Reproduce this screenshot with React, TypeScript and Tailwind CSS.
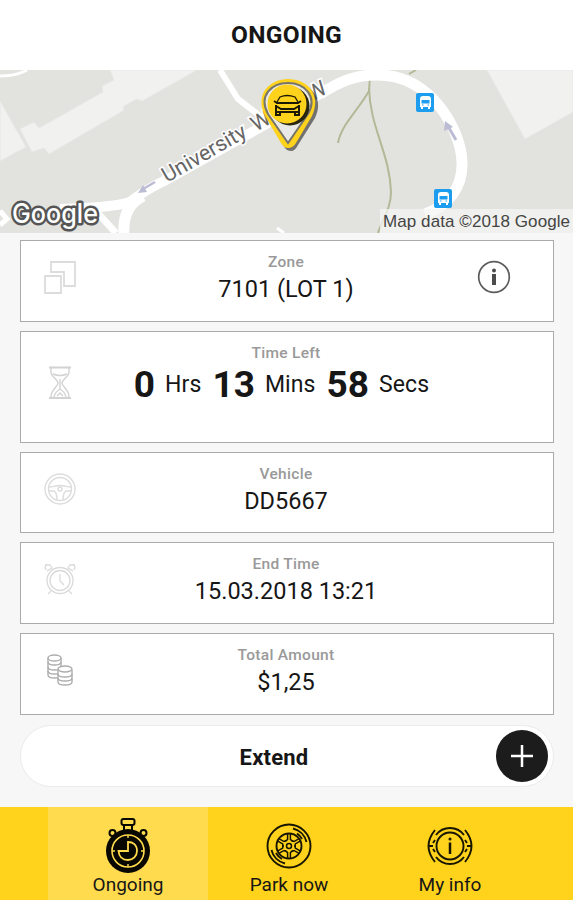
import type { ReactNode } from "react";
import { clsx } from "clsx";

function MapView() {
  return (
    <div className="relative h-[163px] shrink-0 overflow-hidden bg-[#e2e3df]">
      <svg width="573" height="163" viewBox="0 0 573 163" className="block">
        {/* buildings */}
        <path d="M110 0H197L142 31L137 29L124 36L123 41L49 84L44 78L32 82L20 59L34 52L39 58L103 22L102 16L114 10Z" fill="#f1f1f0" stroke="#e8e8e6" />
        <path d="M0 31L26 77L0 91Z" fill="#f1f1f0" stroke="#e8e8e6" />
        <path d="M487 0H573V42L525 69Z" fill="#f1f1f0" stroke="#e8e8e6" />

        {/* footpaths */}
        <g fill="none" stroke="#b5b896" strokeWidth="2">
          <path d="M370 6L369 21C357 42 341 55 338 73" />
          <path d="M369 18C370 58 390 84 391 122C391 138 383 148 378 163" />
          <path d="M409 4L416 0" />
        </g>

        {/* roads */}
        <g fill="none" stroke="#fff">
          <path d="M0 6C9 6 20 4 27 0" strokeWidth="3" />
          <path d="M220 0L238 29L264 49" strokeWidth="6" />
          <path d="M60 139C88 138 115 137 130 132C140 124 151 117 166 110L320 24" strokeWidth="10" />
          <path d="M320 24C341 11 355 5 376 5C431 4 461 60 462 92C463 116 449 136 425 144" strokeWidth="11" />
          <path d="M143 126C129 133 123 146 124 163" strokeWidth="11" />
          <path d="M94 139L116 163" strokeWidth="7" />
          <path d="M0 141L7 149L0 155" strokeWidth="5" />
          <path d="M277 158L284 163" strokeWidth="3" />
        </g>

        {/* one-way arrows */}
        <g fill="#bcbcd5" stroke="#bcbcd5">
          <path d="M155 112L143 119" fill="none" strokeWidth="2.5" />
          <path d="M138 123L143 115L147 122Z" stroke="none" />
          <path d="M456 70L449 58" fill="none" strokeWidth="3" />
          <path d="M445 51L444 61L453 57Z" stroke="none" />
        </g>

        <g fontFamily="Roboto, sans-serif" fontSize="21.5" fill="#666" stroke="#fff" strokeWidth="3" paintOrder="stroke">
          <text transform="translate(167 113) rotate(-30)" textLength="94">
            University
          </text>
          <text transform="translate(256 62) rotate(-30)">W</text>
          <text transform="translate(312 32) rotate(-30)">W</text>
        </g>

        <BusStop x={416} y={23} />
        <BusStop x={434} y={119} />

        <rect x="380" y="139" width="193" height="24" fill="#f4f4f3" fillOpacity=".75" />
        <text x="383" y="157" fontFamily="Liberation Sans, sans-serif" fontSize="17" fill="#444" textLength="187">
          Map data ©2018 Google
        </text>
        <text
          x="12"
          y="153"
          fontFamily="Inter, sans-serif"
          fontSize="27"
          fontWeight="500"
          fill="#fff"
          stroke="#555"
          strokeWidth="5"
          strokeLinejoin="round"
          paintOrder="stroke"
          textLength="86"
          lengthAdjust="spacingAndGlyphs"
        >
          Google
        </text>

        <CarPin />
      </svg>
    </div>
  );
}

function BusStop({ x, y }: { x: number; y: number }) {
  return (
    <g transform={`translate(${x} ${y})`}>
      <rect width="18" height="19" rx="2" fill="#1c9df0" />
      <path d="M4 6Q4 3 7 3H12Q15 3 15 6V14H4Z" fill="#fff" />
      <path d="M5.5 7H13.5V10.500H5.500Z" fill="#1c9df0" />
      <path d="M5 14H7V16H5ZM12 14H14V16H12Z" fill="#fff" />
      <path d="M6 12H7.500M11.500 12H13" stroke="#1c9df0" />
    </g>
  );
}

function CarPin() {
  return (
    <g>
      <path d="M291 81C287 81 285 78 283 75L268 49C255 28 271 12 291 12C310 12 325 28 315 48L298 75Q295 81 291 81Z" fill="#4b4b4b" opacity=".75" />
      <path d="M288 78C285 78 283 76 281 73L265 46C254 24 270 9 288 9C307 9 322 24 312 46L296 73Q293 78 288 78Z" fill="#ffd21c" />
      <path d="M288 73L268 44C258 25 272 13 288 13C305 13 318 27 308 44Z" fill="#e9e9e5" stroke="#77746a" strokeWidth="2" />
      <circle cx="290" cy="36" r="19.500" fill="#282510" />
      <circle cx="287" cy="34" r="19.500" fill="#ffd21c" />
      <g fill="none" stroke="#1b1904">
        <path d="M277 32L280 27Q287 24 295 27L298 32" strokeWidth="1.300" />
        <path d="M274 31L277 33H298L301 31" strokeWidth="1.800" />
        <path d="M276 35V45H280V42H295V45H299V35" strokeWidth="2" />
        <path d="M276 36L281 39H294L299 36M277 42H298" strokeWidth="2" />
      </g>
    </g>
  );
}

function ZoneIcon() {
  return (
    <svg width="32" height="34" viewBox="0 0 32 34" fill="none" stroke="#dcdcdc" strokeWidth="1.8">
      <path d="M7 2H31V26H20V12H7Z" />
      <path d="M1 16H17V33H1Z" />
    </svg>
  );
}

function HourglassIcon() {
  return (
    <svg width="32" height="34" viewBox="0 0 32 34" fill="none" stroke="#d2d2d2" strokeWidth="1.4">
      <path d="M5 1.500H27M5 32H27" strokeWidth="2" />
      <path d="M7 2V6C7 11 14 13 14 17C14 21 7 23 7 31M25 2V6C25 11 18 13 18 17C18 21 25 23 25 31" />
      <path d="M9 8Q16 11 23 8M16 13V23M10 31C11 26 16 23 16 23C16 23 21 26 22 31M13 30L16 27L19 30" />
    </svg>
  );
}

function WheelIcon() {
  return (
    <svg width="32" height="32" viewBox="0 0 32 32" fill="none" stroke="#dcdcdc" strokeWidth="1.4">
      <circle cx="16" cy="16" r="15" />
      <circle cx="16" cy="16" r="11.5" />
      <path d="M5 14C9 14 11 12.500 16 12.500S23 14 27 14M5 18H9C12 18 13 21 13 27M27 18H23C20 18 19 21 19 27" />
      <circle cx="16" cy="16" r="2" />
    </svg>
  );
}

function AlarmIcon() {
  return (
    <svg width="32" height="34" viewBox="0 0 32 34" fill="none" stroke="#dadada" strokeWidth="1.3">
      <circle cx="16" cy="18.500" r="13" />
      <circle cx="16" cy="18.500" r="10" />
      <path d="M16 12V19L20 23M7 29L4 32M25 29L28 32" />
      <path d="M2 8L1 5L3 2M1 3H6L8 6L3 9M30 8L31 5L29 2M31 3H26L24 6L29 9" />
    </svg>
  );
}

function CoinsIcon() {
  return (
    <svg width="28" height="34" viewBox="0 0 28 34" fill="#fff" stroke="#adadad" strokeWidth="1.4">
      <path d="M2 5V22C2 26 15 26 15 22V5" />
      <path d="M2 9C2 13 15 13 15 9M2 14C2 18 15 18 15 14M2 18C2 22 15 22 15 18" fill="none" />
      <ellipse cx="8.500" cy="5" rx="6.500" ry="3" />
      <path d="M12 17V29C12 33 26 33 26 29V17" />
      <path d="M12 21C12 25 26 25 26 21M12 25C12 29 26 29 26 25" fill="none" />
      <ellipse cx="19" cy="16" rx="7" ry="3" />
    </svg>
  );
}

function InfoIcon() {
  return (
    <svg width="34" height="34" viewBox="0 0 34 34">
      <circle cx="17" cy="17" r="15.300" fill="none" stroke="#5c5c5c" strokeWidth="1.700" />
      <circle cx="17" cy="10.500" r="2" fill="#4c4c4c" />
      <path d="M17 14V25" stroke="#4c4c4c" strokeWidth="4" />
    </svg>
  );
}

function StopwatchIcon() {
  return (
    <svg width="46" height="56" viewBox="0 0 46 56" fill="none" stroke="#080800">
      <path d="M19 8V14M27 8V14" strokeWidth="2" />
      <rect x="16.500" y="2" width="13" height="6" rx="2" strokeWidth="2" />
      <circle cx="7.500" cy="16" r="3" strokeWidth="2" />
      <circle cx="38.500" cy="16" r="3" strokeWidth="2" />
      <circle cx="23" cy="34" r="22" fill="#080800" stroke="none" />
      <circle cx="23" cy="34" r="16" stroke="#ffdb4d" strokeWidth="1.600" />
      <path d="M23 18V21M23 47V50M7 34H10M36 34H39" stroke="#ffdb4d" strokeWidth="1.400" />
      <path d="M23 25V34H13.500C14 39 17 43 23 43C28 43 32 39 32 34C32 28 28 25 23 25Z" stroke="#ffdb4d" strokeWidth="1.800" />
    </svg>
  );
}

function TyreIcon() {
  return (
    <svg width="46" height="46" viewBox="0 0 46 46" fill="none" stroke="#171500" strokeWidth="1.900">
      <circle cx="23" cy="23" r="21.500" />
      <circle cx="23" cy="23" r="12.500" />
      <circle cx="23" cy="23" r="2.500" strokeWidth="1.500" />
      {[0, 60, 120, 180, 240, 300].map((deg) => (
        <path key={deg} d="M21.600 11V16.500L19 18.500M24.400 11V16.500L27 18.500" transform={`rotate(${deg} 23 23)`} strokeWidth="1.500" />
      ))}
      <path d="M27 5.500A18 18 0 0 1 40.500 19M31 10.500A15 15 0 0 1 36 16M5.500 27A18 18 0 0 0 19 40.500M10 30A15 15 0 0 0 16 36" />
    </svg>
  );
}

function BrakeInfoIcon() {
  return (
    <svg width="46" height="38" viewBox="0 0 46 38" fill="none" stroke="#171500" strokeWidth="1.900">
      <circle cx="23" cy="19" r="13.500" />
      <path d="M9 8A17.500 17.500 0 0 1 37 8M9 30A17.500 17.500 0 0 0 37 30" />
      <path d="M8 3Q-5 19 8 35M38 3Q51 19 38 35M8 13L6 16M8 25L6 22M38 13L40 16M38 25L40 22M1 19H6M40 19H45" />
      <path d="M23 15.500V27" strokeWidth="2.500" />
      <circle cx="23" cy="12" r="1.500" fill="#171500" stroke="none" />
    </svg>
  );
}

type InfoCardProps = {
  icon: ReactNode;
  label: string;
  action?: ReactNode;
  className?: string;
  children: ReactNode;
};

function InfoCard({ icon, label, action, className, children }: InfoCardProps) {
  return (
    <section className={clsx("grid grid-cols-[78px_1fr_78px] border border-[#aaa] bg-white", className)}>
      <div className="flex items-center justify-center pb-2">{icon}</div>
      <div className="pt-[13px] pr-0.5 text-center">
        <h2 className="text-[15.5px] leading-4 font-medium tracking-[0.3px] text-[#999]">{label}</h2>
        {children}
      </div>
      <div className="flex items-center pb-2">{action}</div>
    </section>
  );
}

function Value({ children }: { children: ReactNode }) {
  return <p className="mt-1 text-[23.5px] leading-[30px] whitespace-nowrap">{children}</p>;
}

const tabs = [
  { label: "Ongoing", icon: <StopwatchIcon />, active: true },
  { label: "Park now", icon: <TyreIcon />, active: false },
  { label: "My info", icon: <BrakeInfoIcon />, active: false },
];

const timeLeft = [
  { amount: "0", unit: "Hrs" },
  { amount: "13", unit: "Mins" },
  { amount: "58", unit: "Secs" },
];

export default function App() {
  return (
    <div className="flex h-[900px] w-[573px] flex-col overflow-hidden bg-[#f7f7f7] font-[Roboto,sans-serif] text-[#161616]">
      <header className="flex h-[70px] shrink-0 items-center justify-center bg-white">
        <h1 className="text-[24.5px] font-bold tracking-[0.3px]">ONGOING</h1>
      </header>

      <MapView />

      <main className="flex flex-1 flex-col pt-[7px] pr-[19px] pl-5">
        <div className="flex flex-col gap-[9px]">
          <InfoCard
            className="h-[82px]"
            icon={<ZoneIcon />}
            label="Zone"
            action={<span className="ml-0.5"><InfoIcon /></span>}
          >
            <Value>7101 (LOT 1)</Value>
          </InfoCard>

          <InfoCard className="h-[112px]" icon={<HourglassIcon />} label="Time Left">
            <div className="mt-0.5 flex items-center justify-center gap-[11px] pr-[9px] whitespace-nowrap">
              {timeLeft.map((part) => (
                <p key={part.unit} className="flex items-center gap-2.5">
                  <span className="text-[37px] leading-[44px] font-bold">{part.amount}</span>
                  <span className="text-[23px] leading-[42px] tracking-[0.1px]">{part.unit}</span>
                </p>
              ))}
            </div>
          </InfoCard>

          <InfoCard className="h-[81px]" icon={<WheelIcon />} label="Vehicle">
            <Value>DD5667</Value>
          </InfoCard>

          <InfoCard className="h-[82px]" icon={<AlarmIcon />} label="End Time">
            <Value>15.03.2018 13:21</Value>
          </InfoCard>

          <InfoCard className="h-[82px]" icon={<CoinsIcon />} label="Total Amount">
            <Value>$1,25</Value>
          </InfoCard>
        </div>

        <button className="mt-2.5 grid h-[62px] grid-cols-[80px_1fr_80px] items-center rounded-full border border-[#ebebeb] bg-white">
          <span className="col-start-2 pt-0.5 pr-[26px] text-[22px] font-bold tracking-[0.2px]">Extend</span>
          <span className="mr-[5px] flex size-[52px] items-center justify-center justify-self-end rounded-full bg-[#1c1c1c]">
            <svg width="22" height="22" viewBox="0 0 22 22" stroke="#fff" strokeWidth="2.500">
              <path d="M11 0V22M0 11H22" />
            </svg>
          </span>
        </button>
      </main>

      <nav className="flex h-[93px] shrink-0 gap-px bg-[#ffd21c] pl-12">
        {tabs.map((tab) => (
          <button key={tab.label} className={clsx("flex w-40 shrink-0 flex-col items-center", tab.active && "bg-[#ffdb4d]")}>
            <span className={clsx("flex h-[66px] justify-center", tab.active ? "items-end" : "items-center pt-[11px]")}>{tab.icon}</span>
            <span className="text-[19px] leading-6">{tab.label}</span>
          </button>
        ))}
      </nav>
    </div>
  );
}
